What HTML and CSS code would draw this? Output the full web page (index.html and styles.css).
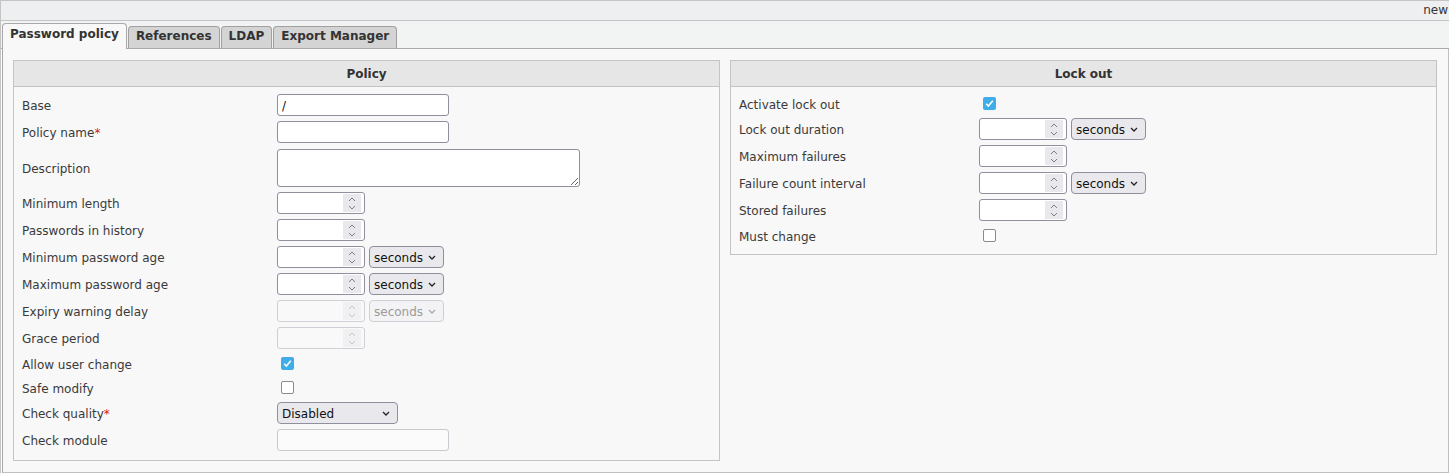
FILE: index.html
```html
<!DOCTYPE html>
<html>
<head>
<meta charset="utf-8">
<link rel="stylesheet" href="styles.css">
</head>
<body>
<div class="app">
  <div class="topbar"><span class="topbar-text">new</span></div>
  <div class="tabs">
    <div class="tab active">Password policy</div>
    <div class="tab">References</div>
    <div class="tab">LDAP</div>
    <div class="tab">Export Manager</div>
  </div>
  <div class="panel">
    <section class="box">
      <div class="box-head">Policy</div>
      <div class="box-body policy">
        <div class="row"><div class="lbl">Base</div><div class="ctl"><input class="text" type="text" value="/"></div></div>
        <div class="row"><div class="lbl">Policy name<span class="req">*</span></div><div class="ctl"><input class="text" type="text"></div></div>
        <div class="row low"><div class="lbl">Description</div><div class="ctl"><textarea class="area"></textarea></div></div>
        <div class="row"><div class="lbl">Minimum length</div><div class="ctl">
          <span class="num"><input type="text"><span class="spin"><svg width="8" height="15" viewBox="0 0 8 15"><path d="M1 5 L4 2 L7 5 M1 10 L4 13 L7 10" fill="none" stroke="#7d7d85" stroke-width="1"/></svg></span></span>
        </div></div>
        <div class="row"><div class="lbl">Passwords in history</div><div class="ctl">
          <span class="num"><input type="text"><span class="spin"><svg width="8" height="15" viewBox="0 0 8 15"><path d="M1 5 L4 2 L7 5 M1 10 L4 13 L7 10" fill="none" stroke="#7d7d85" stroke-width="1"/></svg></span></span>
        </div></div>
        <div class="row"><div class="lbl">Minimum password age</div><div class="ctl">
          <span class="num"><input type="text"><span class="spin"><svg width="8" height="15" viewBox="0 0 8 15"><path d="M1 5 L4 2 L7 5 M1 10 L4 13 L7 10" fill="none" stroke="#7d7d85" stroke-width="1"/></svg></span></span>
          <span class="sel unit"><span class="sel-text">seconds</span><svg width="8" height="5" viewBox="0 0 8 5"><path d="M1 1 L4 4 L7 1" fill="none" stroke="#222" stroke-width="1.3"/></svg></span>
        </div></div>
        <div class="row"><div class="lbl">Maximum password age</div><div class="ctl">
          <span class="num"><input type="text"><span class="spin"><svg width="8" height="15" viewBox="0 0 8 15"><path d="M1 5 L4 2 L7 5 M1 10 L4 13 L7 10" fill="none" stroke="#7d7d85" stroke-width="1"/></svg></span></span>
          <span class="sel unit"><span class="sel-text">seconds</span><svg width="8" height="5" viewBox="0 0 8 5"><path d="M1 1 L4 4 L7 1" fill="none" stroke="#222" stroke-width="1.3"/></svg></span>
        </div></div>
        <div class="row"><div class="lbl">Expiry warning delay</div><div class="ctl">
          <span class="num disabled"><input type="text" disabled><span class="spin"><svg width="8" height="15" viewBox="0 0 8 15"><path d="M1 5 L4 2 L7 5 M1 10 L4 13 L7 10" fill="none" stroke="#c4c4c8" stroke-width="1"/></svg></span></span>
          <span class="sel unit disabled"><span class="sel-text">seconds</span><svg width="8" height="5" viewBox="0 0 8 5"><path d="M1 1 L4 4 L7 1" fill="none" stroke="#a8a8a8" stroke-width="1.3"/></svg></span>
        </div></div>
        <div class="row"><div class="lbl">Grace period</div><div class="ctl">
          <span class="num disabled"><input type="text" disabled><span class="spin"><svg width="8" height="15" viewBox="0 0 8 15"><path d="M1 5 L4 2 L7 5 M1 10 L4 13 L7 10" fill="none" stroke="#c4c4c8" stroke-width="1"/></svg></span></span>
        </div></div>
        <div class="row low"><div class="lbl">Allow user change</div><div class="ctl">
          <span class="cb checked"><svg width="13" height="13" viewBox="0 0 13 13"><path d="M3.2 6.8 L5.4 9 L9.8 3.8" fill="none" stroke="#fff" stroke-width="1.6"/></svg></span>
        </div></div>
        <div class="row low"><div class="lbl">Safe modify</div><div class="ctl"><span class="cb"></span></div></div>
        <div class="row"><div class="lbl">Check quality<span class="req">*</span></div><div class="ctl">
          <span class="sel quality"><span class="sel-text">Disabled</span><svg width="8" height="5" viewBox="0 0 8 5"><path d="M1 1 L4 4 L7 1" fill="none" stroke="#222" stroke-width="1.3"/></svg></span>
        </div></div>
        <div class="row"><div class="lbl">Check module</div><div class="ctl"><input class="text soft" type="text"></div></div>
      </div>
    </section>
    <section class="box">
      <div class="box-head">Lock out</div>
      <div class="box-body lockout">
        <div class="row low"><div class="lbl">Activate lock out</div><div class="ctl">
          <span class="cb checked"><svg width="13" height="13" viewBox="0 0 13 13"><path d="M3.2 6.8 L5.4 9 L9.8 3.8" fill="none" stroke="#fff" stroke-width="1.6"/></svg></span>
        </div></div>
        <div class="row"><div class="lbl">Lock out duration</div><div class="ctl">
          <span class="num"><input type="text"><span class="spin"><svg width="8" height="15" viewBox="0 0 8 15"><path d="M1 5 L4 2 L7 5 M1 10 L4 13 L7 10" fill="none" stroke="#7d7d85" stroke-width="1"/></svg></span></span>
          <span class="sel unit"><span class="sel-text">seconds</span><svg width="8" height="5" viewBox="0 0 8 5"><path d="M1 1 L4 4 L7 1" fill="none" stroke="#222" stroke-width="1.3"/></svg></span>
        </div></div>
        <div class="row"><div class="lbl">Maximum failures</div><div class="ctl">
          <span class="num"><input type="text"><span class="spin"><svg width="8" height="15" viewBox="0 0 8 15"><path d="M1 5 L4 2 L7 5 M1 10 L4 13 L7 10" fill="none" stroke="#7d7d85" stroke-width="1"/></svg></span></span>
        </div></div>
        <div class="row"><div class="lbl">Failure count interval</div><div class="ctl">
          <span class="num"><input type="text"><span class="spin"><svg width="8" height="15" viewBox="0 0 8 15"><path d="M1 5 L4 2 L7 5 M1 10 L4 13 L7 10" fill="none" stroke="#7d7d85" stroke-width="1"/></svg></span></span>
          <span class="sel unit"><span class="sel-text">seconds</span><svg width="8" height="5" viewBox="0 0 8 5"><path d="M1 1 L4 4 L7 1" fill="none" stroke="#222" stroke-width="1.3"/></svg></span>
        </div></div>
        <div class="row"><div class="lbl">Stored failures</div><div class="ctl">
          <span class="num"><input type="text"><span class="spin"><svg width="8" height="15" viewBox="0 0 8 15"><path d="M1 5 L4 2 L7 5 M1 10 L4 13 L7 10" fill="none" stroke="#7d7d85" stroke-width="1"/></svg></span></span>
        </div></div>
        <div class="row low"><div class="lbl">Must change</div><div class="ctl"><span class="cb"></span></div></div>
      </div>
    </section>
  </div>
</div>
</body>
</html>
```
FILE: styles.css
```css
* { box-sizing: border-box; }
html, body { margin: 0; padding: 0; background: #ffffff; }
body {
  font-family: "DejaVu Sans", "Liberation Sans", sans-serif;
  font-size: 12px;
  color: #333333;
}
.app {
  width: 1449px;
  border-top: 1px solid #c4c4c4;
  border-left: 1px solid #c4c4c4;
}
.topbar {
  height: 20px;
  background: #eeeff1;
  border-bottom: 1px solid #c4c4c4;
  display: flex;
  align-items: center;
  justify-content: flex-end;
  padding-right: 1px;
  color: #333;
  line-height: 19px;
}
.tabs {
  display: flex;
  align-items: flex-end;
  height: 28px;
  padding: 2px 0 0 1px;
  background: #f2f3f3;
  border-bottom: 1px solid #a9a9a9;
}
.tab {
  height: 22px;
  padding: 0 7px 4px 7px;
  display: flex;
  align-items: center;
  font-weight: bold;
  color: #333;
  background: #d4d4d4;
  border: 1px solid #a0a0a0;
  border-bottom: none;
  border-radius: 4px 4px 0 0;
  margin-right: 1px;
  white-space: nowrap;
}
.tab.active {
  height: 26px;
  margin-bottom: -1px;
  padding: 0 7px 6px 7px;
  background: #f8f8f8;
  border-color: #a9a9a9;
}
.panel {
  margin-left: 1px;
  background: #f8f8f8;
  border-left: 1px solid #a9a9a9;
  border-right: 1px solid #c0c0c0;
  border-bottom: 1px solid #c0c0c0;
  padding: 11px 11px 11px 10px;
  display: grid;
  grid-template-columns: 707px 707px;
  column-gap: 10px;
  align-items: start;
}
.box {
  border: 1px solid #c4c4c4;
  background: #f8f8f8;
}
.box-head {
  height: 26px;
  background: #e6e6e6;
  border-bottom: 1px solid #c4c4c4;
  display: flex;
  align-items: center;
  justify-content: center;
  font-weight: bold;
  color: #333;
}
.box-body {
  padding: 5px 8px 6px 8px;
}
.row {
  display: flex;
  align-items: center;
  padding: 2px 0 3px 0;
}
.lbl {
  flex: none;
  white-space: nowrap;
  color: #3a3a3a;
  padding-top: 1px;
}
.row.low .lbl { padding-top: 3px; }
.policy .lbl { width: 255px; }
.lockout .lbl { width: 240px; }
.req { color: #d42020; }
.ctl {
  display: flex;
  align-items: center;
  gap: 4px;
}
.text {
  width: 172px;
  height: 22px;
  margin: 0;
  border: 1px solid #8f8f9d;
  border-radius: 3px;
  background: #ffffff;
  font: 12px "DejaVu Sans", sans-serif;
  color: #111;
  padding: 1px 4px 0 4px;
  outline: none;
}
.text.soft {
  border-color: #c9c9cf;
  background: #fbfbfb;
}
.area {
  display: block;
  width: 303px;
  height: 38px;
  margin: 1px 0 0 0;
  border: 1px solid #8f8f9d;
  border-radius: 3px;
  background: #ffffff;
  font: 12px "DejaVu Sans", sans-serif;
  padding: 2px 4px;
  resize: both;
}
.num {
  display: flex;
  width: 88px;
  height: 22px;
  border: 1px solid #8f8f9d;
  border-radius: 3px;
  background: #ffffff;
}
.num input {
  flex: 1;
  min-width: 0;
  border: none;
  background: transparent;
  font: 12px "DejaVu Sans", sans-serif;
  padding: 0 4px;
  outline: none;
}
.spin {
  flex: none;
  width: 18px;
  margin: 1px 3px 1px 0;
  background: #e9e9ed;
  display: flex;
  align-items: center;
  justify-content: center;
}
.num.disabled {
  border-color: #cfcfd5;
  background: #f9f9f9;
}
.num.disabled .spin { background: #f0f0f2; }
.sel {
  display: flex;
  align-items: center;
  justify-content: space-between;
  height: 22px;
  padding: 1px 7px 0 4px;
  border: 1px solid #8f8f9d;
  border-radius: 4px;
  background: #e9e9ed;
  color: #111;
}
.sel svg { flex: none; }
.sel.unit { width: 75px; }
.sel.quality { width: 121px; }
.sel.disabled {
  border-color: #cfcfd5;
  background: #f3f3f5;
  color: #9a9a9a;
}
.cb {
  display: block;
  width: 13px;
  height: 13px;
  margin: 3px 3px 3px 4px;
  border: 1.5px solid #8a8a94;
  border-radius: 2px;
  background: #ffffff;
}
.cb svg { display: block; }
.cb.checked {
  border: none;
  background: #3daee9;
}
```
